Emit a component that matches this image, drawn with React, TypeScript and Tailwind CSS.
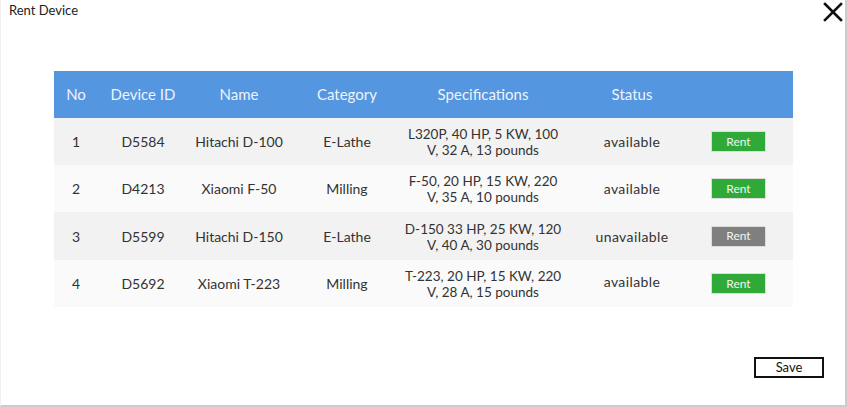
import React from "react";

type Device = {
  no: number;
  id: string;
  name: string;
  category: string;
  spec: [string, string];
  available: boolean;
  bg: string;
  h: string;
};

const devices: Device[] = [
  {
    no: 1,
    id: "D5584",
    name: "Hitachi D-100",
    category: "E-Lathe",
    spec: ["L320P, 40 HP, 5 KW, 100", "V, 32 A, 13 pounds"],
    available: true,
    bg: "bg-[#f2f2f2]",
    h: "h-[47px]",
  },
  {
    no: 2,
    id: "D4213",
    name: "Xiaomi F-50",
    category: "Milling",
    spec: ["F-50, 20 HP, 15 KW, 220", "V, 35 A, 10 pounds"],
    available: true,
    bg: "bg-[#fafafa]",
    h: "h-[47px]",
  },
  {
    no: 3,
    id: "D5599",
    name: "Hitachi D-150",
    category: "E-Lathe",
    spec: ["D-150 33 HP, 25 KW, 120", "V, 40 A, 30 pounds"],
    available: false,
    bg: "bg-[#f2f2f2]",
    h: "h-[48px]",
  },
  {
    no: 4,
    id: "D5692",
    name: "Xiaomi T-223",
    category: "Milling",
    spec: ["T-223, 20 HP, 15 KW, 220", "V, 28 A, 15 pounds"],
    available: true,
    bg: "bg-[#fafafa]",
    h: "h-[47px]",
  },
];

const cols = "grid grid-cols-[44px_90px_102px_114px_158px_140px_91px]";

const App = () => {
  return (
    <div className="w-[847px] h-[407px] bg-white border-r-2 border-b-2 border-[#cccccc] border-l border-l-[#f0f0f0] flex flex-col font-['Lato',sans-serif] text-[#333333]">
      <div className="flex justify-between items-start">
        <h1 className="pl-[8px] pt-[1px] text-[13px] text-[#222222]">Rent Device</h1>
        <svg width="20" height="20" viewBox="0 0 20 20" className="mt-[2px] mr-[2px]">
          <path d="M2 2 L18 18 M18 2 L2 18" stroke="#111111" strokeWidth="2.6" strokeLinecap="square" />
        </svg>
      </div>

      <div className="mx-[53px] mt-[49px] w-[739px]">
        <div className={`${cols} h-[47px] bg-[#5596e0] text-[#eef3fb] text-[15px] items-center text-center`}>
          <div>No</div>
          <div>Device ID</div>
          <div>Name</div>
          <div>Category</div>
          <div>Specifications</div>
          <div>Status</div>
          <div></div>
        </div>
        {devices.map((d) => (
          <div
            key={d.no}
            className={`${cols} ${d.h} ${d.bg} items-center text-center text-[14px]`}
          >
            <div>{d.no}</div>
            <div>{d.id}</div>
            <div>{d.name}</div>
            <div>{d.category}</div>
            <div className="text-[13.5px] leading-[16px] pt-[1px]">
              <div>{d.spec[0]}</div>
              <div>{d.spec[1]}</div>
            </div>
            <div className={`tracking-[0.4px] ${d.no === 4 ? "-mt-[4px]" : ""}`}>
              {d.available ? "available" : "unavailable"}
            </div>
            <div className="flex pl-[9px]">
              <button
                className={`w-[55px] h-[21px] text-[12px] text-[#eef6ee] ${
                  d.available ? "bg-[#2faa39]" : "bg-[#7f7f7f]"
                } border border-[#dddddd]`}
              >
                Rent
              </button>
            </div>
          </div>
        ))}
      </div>

      <div className="flex justify-end mt-auto mb-[27px] mr-[21px]">
        <button className="w-[70px] h-[21px] border-2 border-[#111111] text-[13px] text-[#111111] leading-none">
          Save
        </button>
      </div>
    </div>
  );
};

export default App;
